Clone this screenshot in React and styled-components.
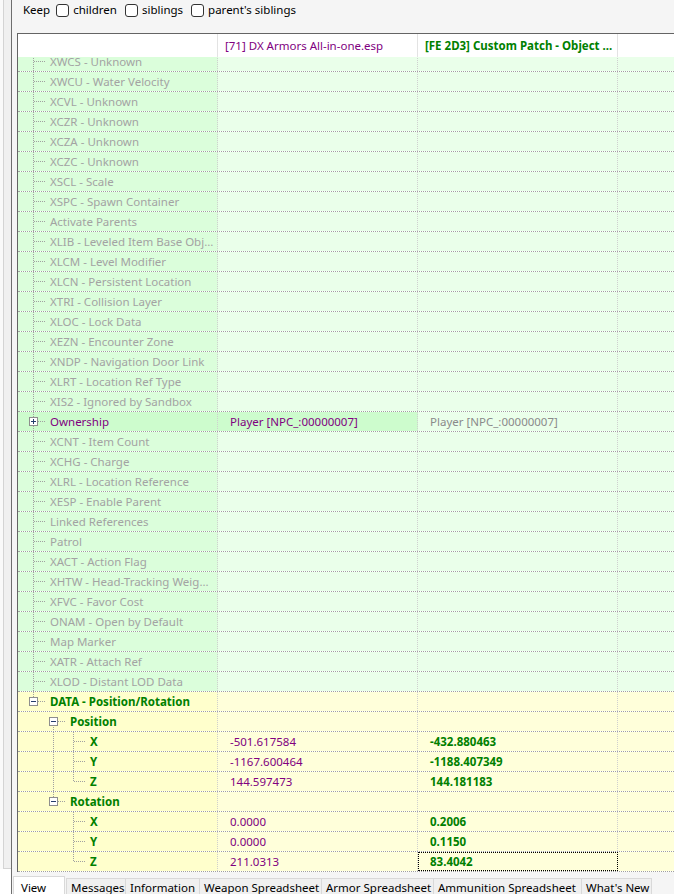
import React from "react";
import styled, { createGlobalStyle, css } from "styled-components";

const GlobalStyle = createGlobalStyle`
  html, body {
    margin: 0;
    padding: 0;
    background: #f5f5f5;
  }
  body {
    font-family: "Noto Sans", "Segoe UI", sans-serif;
    font-size: 11.5px;
  }
`;

const COLS = "200px 200px 200px 1fr";

const tones = {
  green: { name: "#dbfedb", value: "#eaffea", value2: "#eaffea" },
  owner: { name: "#cdfccd", value: "#cdfccd", value2: "#eaffea" },
  yellow: { name: "#ffffcc", value: "#ffffda", value2: "#ffffda" },
};

const inks = {
  gray: "#a3a3a3",
  purple: "#800080",
  green: "#008000",
  dim: "#8a8a8a",
};

// ---- data ----
const topFields = [
  "XWCS - Unknown",
  "XWCU - Water Velocity",
  "XCVL - Unknown",
  "XCZR - Unknown",
  "XCZA - Unknown",
  "XCZC - Unknown",
  "XSCL - Scale",
  "XSPC - Spawn Container",
  "Activate Parents",
  "XLIB - Leveled Item Base Obj...",
  "XLCM - Level Modifier",
  "XLCN - Persistent Location",
  "XTRI - Collision Layer",
  "XLOC - Lock Data",
  "XEZN - Encounter Zone",
  "XNDP - Navigation Door Link",
  "XLRT - Location Ref Type",
  "XIS2 - Ignored by Sandbox",
];

const lowerFields = [
  "XCNT - Item Count",
  "XCHG - Charge",
  "XLRL - Location Reference",
  "XESP - Enable Parent",
  "Linked References",
  "Patrol",
  "XACT - Action Flag",
  "XHTW - Head-Tracking Weig...",
  "XFVC - Favor Cost",
  "ONAM - Open by Default",
  "Map Marker",
  "XATR - Attach Ref",
  "XLOD - Distant LOD Data",
];

const plain = (label) => ({ label, tone: "green", ink: "gray", guides: ["tee"] });

const rows = [
  ...topFields.map(plain),
  {
    label: "Ownership",
    tone: "owner",
    ink: "purple",
    guides: ["tee"],
    box: "plus",
    a: "Player [NPC_:00000007]",
    b: "Player [NPC_:00000007]",
    bInk: "dim",
  },
  ...lowerFields.map(plain),
  { label: "DATA - Position/Rotation", tone: "yellow", ink: "green", bold: true, guides: ["elbow"], box: "minus" },
  { label: "Position", tone: "yellow", ink: "green", bold: true, guides: ["blank", "first"], box: "minus" },
  { label: "X", tone: "yellow", ink: "green", bold: true, guides: ["blank", "pipe", "tee"], a: "-501.617584", b: "-432.880463" },
  { label: "Y", tone: "yellow", ink: "green", bold: true, guides: ["blank", "pipe", "tee"], a: "-1167.600464", b: "-1188.407349" },
  { label: "Z", tone: "yellow", ink: "green", bold: true, guides: ["blank", "pipe", "elbow"], a: "144.597473", b: "144.181183" },
  { label: "Rotation", tone: "yellow", ink: "green", bold: true, guides: ["blank", "elbow"], box: "minus" },
  { label: "X", tone: "yellow", ink: "green", bold: true, guides: ["blank", "blank", "tee"], a: "0.0000", b: "0.2006" },
  { label: "Y", tone: "yellow", ink: "green", bold: true, guides: ["blank", "blank", "tee"], a: "0.0000", b: "0.1150" },
  { label: "Z", tone: "yellow", ink: "green", bold: true, guides: ["blank", "blank", "elbow"], a: "211.0313", b: "83.4042", focus: true },
];

const tabs = [
  { label: "View", width: 52, active: true },
  { label: "Messages", width: 60 },
  { label: "Information", width: 75 },
  { label: "Weapon Spreadsheet", width: 123 },
  { label: "Armor Spreadsheet", width: 113 },
  { label: "Ammunition Spreadsheet", width: 149 },
  { label: "What's New", width: 71 },
];

// ---- frame ----
const Frame = styled.div`
  display: flex;
  width: 674px;
  height: 894px;
  overflow: hidden;
  background: #f5f5f5;
`;

const LeftRail = styled.div`
  flex: 0 0 11px;
  display: flex;
  flex-direction: column;
  border-right: 1px solid #6e6e6e;
  background: #fafafa;
`;

const RailPanel = styled.div`
  flex: 0 0 868px;
  margin-left: 3px;
  border-left: 1px solid #d4d4d4;
  border-bottom: 1px solid #d4d4d4;
  background: #f0f0f0;
`;

const RailRest = styled.div`
  flex: 1;
  background: #ffffff;
`;

const Main = styled.div`
  flex: 1;
  min-width: 0;
  display: flex;
  flex-direction: column;
`;

// ---- keep bar ----
const KeepBar = styled.div`
  height: 33px;
  display: flex;
  align-items: flex-start;
  padding: 2px 0 0 11px;
  box-sizing: border-box;
  color: #000;
  line-height: 16px;
`;

const KeepLabel = styled.span`
  margin-right: 6px;
`;

const Check = styled.label`
  display: flex;
  align-items: center;
  margin-right: 8px;
`;

const CheckBox = styled.span`
  width: 11px;
  height: 11px;
  border: 1px solid #333333;
  border-radius: 3px;
  background: #ffffff;
  margin-right: 4px;
`;

// ---- tree ----
const TreeWrap = styled.div`
  padding-left: 5px;
`;

const Tree = styled.div`
  border-top: 1px solid #646464;
  border-left: 1px solid #646464;
  background: #ffffff;
  overflow: hidden;
`;

const Header = styled.div`
  display: grid;
  grid-template-columns: ${COLS};
  height: 23px;
  background: #ffffff;
`;

const HeadCell = styled.div`
  border-right: 1px solid ${(p) => (p.$last ? "transparent" : "#e3e3e3")};
  padding-left: 7px;
  line-height: 23px;
  white-space: nowrap;
  overflow: hidden;
  color: ${(p) => inks[p.$ink] || "#000"};
  font-weight: ${(p) => (p.$bold ? 700 : 400)};
`;

const Body = styled.div`
  height: 815px;
  overflow: hidden;
`;

const Rows = styled.div`
  margin-top: -5px;
`;

const Row = styled.div`
  display: grid;
  grid-template-columns: ${COLS};
  height: 20px;
  box-sizing: border-box;
  border-bottom: 1px dotted #a0a0a0;
`;

const Cell = styled.div`
  position: relative;
  height: 19px;
  line-height: 19px;
  padding-left: 12px;
  white-space: nowrap;
  overflow: hidden;
  background: ${(p) => p.$bg};
  border-right: 1px dotted ${(p) => (p.$last ? "transparent" : "#cfcfcf")};
  color: ${(p) => inks[p.$ink] || "#000"};
  font-weight: ${(p) => (p.$bold ? 700 : 400)};
  ${(p) =>
    p.$focus &&
    css`
      outline: 1px dotted #000000;
      outline-offset: -1px;
    `}
`;

const NameCell = styled(Cell)`
  display: flex;
  padding-left: 6px;
  overflow: visible;
`;

const dotsV = "repeating-linear-gradient(to bottom, #a0a0a0 0 1px, transparent 1px 2px)";
const dotsH = "repeating-linear-gradient(to right, #a0a0a0 0 1px, transparent 1px 2px)";

const Guide = styled.span`
  position: relative;
  flex: 0 0 20px;
  height: 19px;

  &::before {
    content: "";
    position: absolute;
    left: 9px;
    width: 1px;
    background: ${dotsV};
    display: ${(p) => (p.$kind === "blank" ? "none" : "block")};
    top: ${(p) => (p.$kind === "first" ? "9px" : "0")};
    bottom: ${(p) => (p.$kind === "elbow" ? "10px" : "-1px")};
  }

  &::after {
    content: "";
    position: absolute;
    top: 9px;
    height: 1px;
    left: 10px;
    width: 12px;
    background: ${dotsH};
    display: ${(p) => (p.$end ? "block" : "none")};
  }
`;

const Expander = styled.span`
  position: absolute;
  z-index: 1;
  left: 5px;
  top: 5px;
  width: 7px;
  height: 7px;
  border: 1px solid #8e8e8e;
  background: #ffffff;

  &::before {
    content: "";
    position: absolute;
    left: 1px;
    top: 3px;
    width: 5px;
    height: 1px;
    background: #243c6c;
  }

  &::after {
    content: "";
    position: absolute;
    left: 3px;
    top: 1px;
    width: 1px;
    height: 5px;
    background: #243c6c;
    display: ${(p) => (p.$plus ? "block" : "none")};
  }
`;

const Label = styled.span`
  margin-left: 6px;
  white-space: nowrap;
`;

// ---- tabs ----
const TabStrip = styled.div`
  flex: 1;
  display: flex;
  align-items: flex-end;
  padding-left: 1px;
`;

const Tab = styled.div`
  flex: 0 0 auto;
  box-sizing: border-box;
  height: ${(p) => (p.$active ? "18px" : "16px")};
  margin-right: ${(p) => (p.$active ? "1px" : "-1px")};
  padding-left: ${(p) => (p.$active ? "7px" : "4px")};
  border: 1px solid #d9d9d9;
  border-bottom: none;
  background: ${(p) => (p.$active ? "#ffffff" : "#f0f0f0")};
  color: #000;
  line-height: ${(p) => (p.$active ? "21px" : "17px")};
  white-space: nowrap;
  overflow: hidden;
`;

const TreeRow = ({ row }) => {
  const tone = tones[row.tone];
  const last = row.guides.length - 1;
  return (
    <Row>
      <NameCell $bg={tone.name} $ink={row.ink} $bold={row.bold}>
        {row.guides.map((kind, i) => (
          <Guide key={i} $kind={kind} $end={i === last}>
            {i === last && row.box && <Expander $plus={row.box === "plus"} />}
          </Guide>
        ))}
        <Label>{row.label}</Label>
      </NameCell>
      <Cell $bg={tone.value} $ink="purple">
        {row.a}
      </Cell>
      <Cell $bg={tone.value2} $ink={row.bInk || "green"} $bold={!row.bInk} $focus={row.focus}>
        {row.b}
      </Cell>
      <Cell $bg={tone.value2} $last />
    </Row>
  );
};

export default function App() {
  return (
    <>
      <GlobalStyle />
      <Frame>
        <LeftRail>
          <RailPanel />
          <RailRest />
        </LeftRail>
        <Main>
          <KeepBar>
            <KeepLabel>Keep</KeepLabel>
            <Check>
              <CheckBox />
              children
            </Check>
            <Check>
              <CheckBox />
              siblings
            </Check>
            <Check>
              <CheckBox />
              parent's siblings
            </Check>
          </KeepBar>
          <TreeWrap>
            <Tree>
              <Header>
                <HeadCell />
                <HeadCell $ink="purple">[71] DX Armors All-in-one.esp</HeadCell>
                <HeadCell $ink="green" $bold>
                  [FE 2D3] Custom Patch - Object ...
                </HeadCell>
                <HeadCell $last />
              </Header>
              <Body>
                <Rows>
                  {rows.map((row, i) => (
                    <TreeRow key={i} row={row} />
                  ))}
                </Rows>
              </Body>
            </Tree>
          </TreeWrap>
          <TabStrip>
            {tabs.map((t) => (
              <Tab key={t.label} $active={t.active} style={{ width: t.width }}>
                {t.label}
              </Tab>
            ))}
          </TabStrip>
        </Main>
      </Frame>
    </>
  );
}
